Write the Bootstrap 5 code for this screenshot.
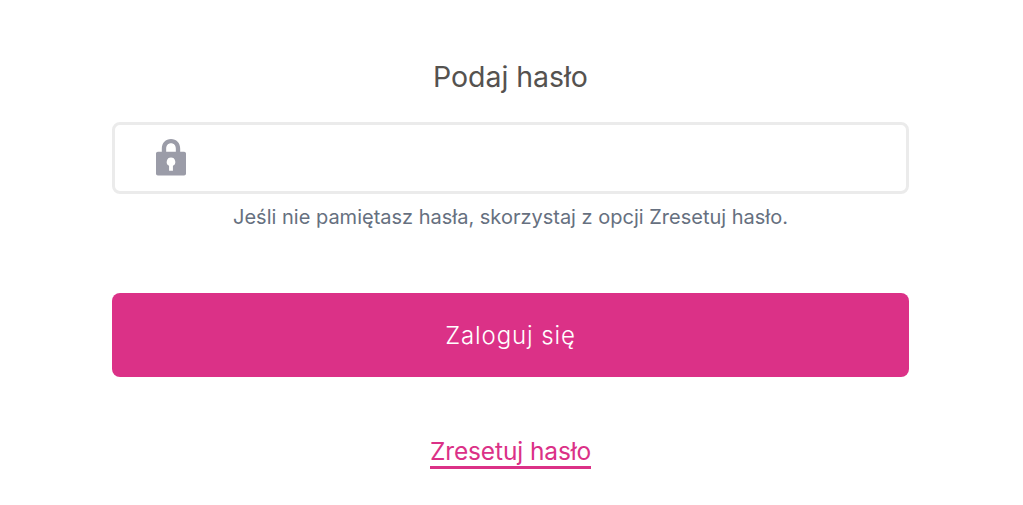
<!DOCTYPE html>
<html lang="pl">
<head>
<meta charset="utf-8">
<title>Podaj hasło</title>
<link href="https://cdn.jsdelivr.net/npm/bootstrap@5.3.0/dist/css/bootstrap.min.css" rel="stylesheet">
<style>
html,body{height:505px;overflow:hidden;background:#fff;font-family:Inter,"Liberation Sans",sans-serif}
.login-wrap{width:797px;margin-left:112px;padding-top:60px}
.login-title{font-size:28.500px;line-height:34px;font-weight:400;color:#55524f;margin:0 0 28px;letter-spacing:-.05px}
.pass-box{height:72px;border:3px solid #ebebeb;border-radius:8px;padding-left:41px}
.pass-box svg{width:30px;height:37px;margin-top:-2px}
.pass-input{border:0;outline:0;background:transparent;min-width:0}
.login-hint{font-size:20px;line-height:24px;color:#667080;margin:11px 0 0;letter-spacing:0}
.login-btn{height:84px;margin-top:64px;padding-top:8px;background:#db3187;border:0;border-radius:8px;color:#fff;font-size:24px;letter-spacing:.9px;font-weight:300}
.login-btn:hover,.login-btn:focus{background:#db3187;color:#fff}
.reset-row{margin-top:59px}
.reset-link{font-size:24.500px;line-height:30px;color:#db3187;text-decoration:none;border-bottom:3px solid #db3187;display:inline-block;letter-spacing:-.12px}
</style>
</head>
<body>
<main class="login-wrap">
  <h1 class="login-title text-center">Podaj hasło</h1>
  <div class="pass-box d-flex align-items-center bg-white">
    <svg viewBox="0 0 31 38" preserveAspectRatio="none" aria-hidden="true"><path fill="#9b9ca8" fill-rule="evenodd" d="M6 13V10C6 4 10 0 15.500 0S25 4 25 10V13H29C30.200 13 31 13.800 31 15V35.500C31 36.800 30.200 37.500 29 37.500H2C.8 37.500 0 36.800 0 35.500V15C0 13.800 .8 13 2 13ZM10.500 13H20.500V10C20.500 6.500 18.500 4.300 15.500 4.300S10.500 6.500 10.500 10ZM15.500 19A4.500 4.500 0 0 0 13.500 27.500V32.500H17.500V27.500A4.500 4.500 0 0 0 15.500 19Z"/></svg>
    <input class="pass-input flex-grow-1 ms-3" type="password" aria-label="Hasło">
  </div>
  <p class="login-hint text-center">Jeśli nie pamiętasz hasła, skorzystaj z opcji Zresetuj hasło.</p>
  <button class="btn login-btn w-100" type="button">Zaloguj się</button>
  <div class="reset-row text-center"><a class="reset-link" href="#">Zresetuj hasło</a></div>
</main>
<script src="https://cdn.jsdelivr.net/npm/bootstrap@5.3.0/dist/js/bootstrap.bundle.min.js"></script>
</body>
</html>
